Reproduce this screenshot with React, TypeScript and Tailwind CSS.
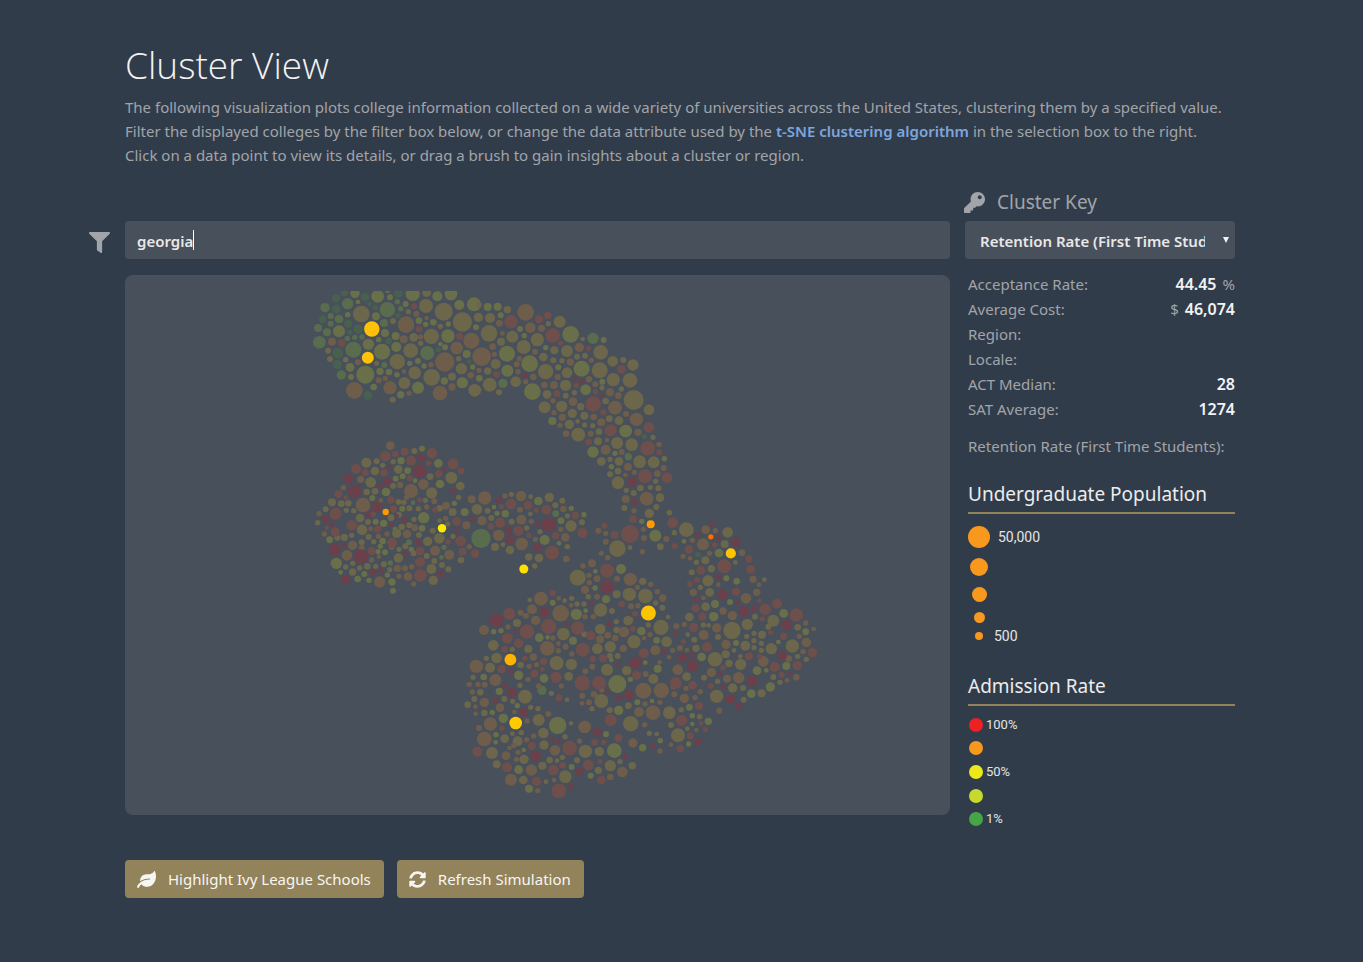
import { useState } from "react";
import type { ReactNode } from "react";
import { FaFilter, FaKey, FaLeaf, FaSyncAlt } from "react-icons/fa";

/* Muted points run from low admission rate (a, green) to high (g, red). */
const mutedColors: Record<string, string> = {
  a: "#48614f",
  b: "#596c4e",
  c: "#697049",
  d: "#6c664a",
  e: "#6e5d4a",
  f: "#6f4f4b",
  g: "#6c404a",
};

type Tile = { x: number; y: number; dots: Record<string, string> };

/* Each tile has an origin in plot units; its dots are "x,y,r" in thirds of a unit. */
const tiles: Tile[] = [
  {
    x: 300,
    y: 280,
    dots: {
      a: "133,38,11 108,55,12 195,51,12 295,40,13 109,87,13 68,118,11 145,131,12 174,148,14 113,219,16 112,254,14 204,346,13 209,72,7 226,83,8 150,157,8 266,183,9 415,209,8 508,245,7 294,106,8",
      b: "143,71,17 262,89,23 117,117,13 92,108,9 54,144,12 81,157,12 58,187,19 160,209,24 75,83,14 92,131,9 124,285,14 382,219,21 142,175,8 164,172,8 186,171,8 292,65,8 302,86,8 252,129,12 253,255,9",
      c: "165,40,14 233,49,19 338,42,21 412,49,15 453,42,19 270,52,9 317,72,9 228,109,12 117,154,18 174,66,7 143,104,8 205,193,17 255,159,12 246,215,24 287,168,12 236,179,8 289,201,15 150,262,13 196,284,27 153,291,9 221,321,10 240,274,11 267,276,10 291,284,8 354,243,9 329,250,8 354,323,18 302,344,11 372,258,8 478,75,15 522,73,21 357,122,10 377,133,8 400,127,10 445,132,8 444,168,20 528,142,9 421,192,7 435,202,9 433,303,11 487,308,17 500,222,12 518,261,8 538,295,10 137,239,8",
      d: "184,102,25 378,78,21 325,95,8 431,95,27 487,126,29 394,169,23 341,172,13 292,245,23 332,212,22 344,278,19 395,292,25 484,266,17 313,309,18 535,112,14 278,359,9 230,250,8 456,290,12 524,331,19 84,212,9 90,237,9 380,38,13 279,123,9 421,139,8 362,190,8 476,236,8 263,31,8",
      e: "96,185,12 318,134,25 311,178,12 349,101,9 380,114,7 362,171,8 514,182,24 470,204,19 434,246,29 163,331,25 270,323,20 236,301,9 256,295,8 312,275,7 393,254,8 327,340,8 420,339,22 456,321,11 512,286,10 174,247,9 537,271,8",
      f: "125,189,11 342,79,9 357,147,10 479,169,11",
    },
  },
  {
    x: 480,
    y: 280,
    dots: {
      a: "493,470,8",
      b: "69,310,14 339,175,17 445,530,11",
      c: "53,80,12 23,81,12 62,106,9 81,221,24 149,251,25 120,147,9 133,167,8 82,272,18 157,335,25 197,203,8 235,262,9 272,163,25 305,266,24 371,180,9 317,329,16 367,305,9 339,516,17 217,423,12 437,453,19 405,520,8 394,560,8 553,536,8",
      d: "-4,75,9 30,114,15 82,89,11 0,113,9 27,160,25 63,185,12 47,252,15 23,273,11 29,314,21 0,330,5 57,337,9 107,305,16 97,170,18 205,131,8 239,125,18 308,177,7 172,179,20 131,201,21 223,211,12 190,231,13 220,241,9 261,213,18 246,242,8 197,275,23 261,278,16 291,230,9 315,227,9 257,316,17 362,217,22 359,271,24 400,299,20 398,244,16 430,240,9 459,255,17 450,301,22 461,360,30 366,323,8 424,327,8 201,343,13 257,347,9 283,338,8 245,379,17 277,400,14 302,380,11 194,382,18 313,407,12 268,433,14 293,424,7 314,435,8 338,437,8 295,464,21 357,455,10 354,484,12 388,416,10 417,422,13 377,363,10 507,389,16 519,472,8 411,489,18 455,494,19 479,545,19 521,547,18 417,544,13 364,544,13 390,538,8 414,573,10 390,583,9 414,608,19 439,631,8 461,639,9 481,624,10 511,622,8 535,625,9 527,604,8 433,684,9 529,681,9 508,700,14 568,698,8 540,653,13",
      e: "137,97,25 151,143,16 58,130,10 67,160,7 38,200,10 43,223,8 5,230,28 110,253,9 118,236,8 114,275,8 160,291,10 137,305,8 185,145,11 165,215,9 271,246,11 298,202,14 334,241,8 233,291,9 193,315,10 222,315,12 327,298,10 346,313,9 219,362,8 279,365,13 247,412,11 240,436,8 222,398,8 341,411,10 364,427,12 258,461,10 332,461,9 381,480,7 377,509,15 405,383,21 415,347,10 390,337,12 438,402,9 469,418,20 474,457,11 425,516,9 444,561,12 463,577,8 436,585,7 532,581,10 551,564,9 537,493,8 500,656,21 437,657,12 462,692,8",
      f: "93,125,20 50,283,10 177,118,12 203,106,11 218,167,22 242,190,8 326,205,8 340,372,23 231,341,10 289,316,8 424,268,13 392,451,18 326,486,10 370,397,9 507,442,16 503,505,22 538,517,9 495,589,21 561,593,16 346,335,8",
      g: "134,286,8 286,297,8 305,304,7 365,346,7 456,606,15 464,665,10",
    },
  },
  {
    x: 305,
    y: 430,
    dots: {
      b: "256,399,8 312,337,9 417,352,8 409,382,7 324,218,7",
      c: "351,56,9 288,92,11 272,146,9 293,139,9 308,122,10 243,186,13 405,162,13 400,100,13 202,204,9 236,280,11 212,275,9 233,333,10 226,349,8 356,263,17 351,295,10 448,220,8 94,400,17 107,427,7 158,447,10 192,451,8 178,432,9 261,456,11 264,482,9 219,365,8 247,435,8 240,367,9 74,329,10 319,358,8 330,152,7 292,236,9 270,297,7 479,246,12",
      d: "184,98,15 215,94,9 233,106,8 210,123,13 265,95,8 280,118,13 328,63,9 197,157,16 264,168,9 185,186,10 210,184,10 81,217,12 62,238,9 130,220,10 109,221,10 124,241,8 146,242,8 165,264,13 189,276,9 171,299,16 118,322,11 97,323,9 140,316,8 170,337,9 191,321,9 187,409,10 164,414,8 122,411,8 143,400,8 143,426,11 212,409,8 206,335,8 258,263,10 275,310,14 290,291,10 282,254,9 281,216,9 297,217,8 313,235,9 340,236,8 361,211,8 380,189,17 375,140,10 439,143,18 466,168,13 403,325,16 383,302,9 428,282,8 443,246,12 368,334,14 342,315,9 280,384,14 301,349,9 282,358,8 326,370,9 365,378,9 379,417,15 385,451,14 411,405,9 388,393,9 430,418,9 467,391,9 444,319,8 38,278,8 404,235,10 404,272,7 313,286,9 254,419,8 327,268,8 461,202,8 237,403,9 516,238,16",
      e: "256,47,13 318,183,21 174,225,22 143,346,14 126,376,16 42,251,8 58,312,8 115,173,8 167,148,11 224,456,17 277,415,11 300,415,9 320,410,8 326,462,8 309,440,13 282,439,8 306,312,13 329,293,10 433,374,15 390,362,15 423,227,12 388,214,9 285,165,10 355,163,16 305,202,8 200,390,8 222,380,7 246,312,8 220,319,8 197,296,7 260,352,8 365,231,8 422,265,8 484,286,12 531,272,14 500,208,12 539,204,20 473,365,11 493,350,8 170,354,9 228,211,7",
      f: "140,286,16 218,297,11 241,79,16 271,72,10 299,65,12 381,70,16 318,92,15 153,117,15 181,128,10 237,128,11 314,145,9 444,101,16 468,123,10 401,132,11 371,100,8 100,193,12 122,203,7 92,251,18 91,306,14 66,293,7 200,363,12 261,338,15 205,253,8 258,210,11 265,237,11 345,363,13 346,436,19 345,397,15 455,274,13 467,333,16 390,240,9 429,336,8 344,210,8 510,371,12",
      g: "344,124,21 149,184,20 130,146,15 216,231,16 168,379,21 89,359,18 122,448,14 61,267,11 82,283,7 348,84,12 247,155,12 225,168,8 190,255,9 204,429,10 228,423,8 258,285,7 298,270,9 338,337,10 303,370,8 408,432,10 117,347,7 255,111,7 445,184,9 418,118,7 275,258,7 502,267,8 456,303,7",
    },
  },
  {
    x: 460,
    y: 480,
    dots: {
      b: "63,175,29 287,101,10",
      c: "235,63,13 102,81,7 136,101,11 111,100,8 334,85,8 303,122,10 372,104,8 254,180,15 297,190,7",
      d: "94,114,9 83,92,9 268,52,14 307,62,9 286,76,9 366,127,9 333,138,17 322,200,8 240,155,8 200,144,8 105,201,12 129,194,7 150,210,13 206,231,11 237,234,13 224,258,8 4,240,9 154,43,8 212,50,7 322,108,8 155,125,9 211,102,7 472,206,25 510,203,7",
      e: "183,48,16 135,48,8 116,166,17 184,119,15 185,192,19 316,172,13 310,87,10 180,89,9 302,148,8 226,178,8 319,237,10 214,124,8 415,152,9 437,160,8 437,185,9 424,220,8 443,233,8",
      f: "153,72,16 204,76,13 92,139,10 120,128,15 175,153,15 45,220,12 8,216,10 259,89,15 276,218,21 287,167,11 367,159,15 346,106,11 124,80,8 207,166,8 229,91,8 433,137,9 464,164,12 510,162,27 520,118,11",
      g: "267,133,21 145,149,11 150,178,13 115,59,9 234,133,8 232,203,12",
    },
  },
  {
    x: 455,
    y: 550,
    dots: {
      b: "261,421,14",
      c: "498,57,15 364,193,17 293,158,9 138,242,8 278,262,7 116,245,8 253,263,13 354,272,12 421,64,7 420,114,8 453,148,12 392,182,7 487,402,27 133,424,11 145,505,14 123,554,8 122,577,7 478,602,22 308,526,26 191,659,13 407,677,9 453,553,9 222,716,12 267,385,13 191,376,14 491,481,14 469,330,7 112,487,8 86,381,10 187,467,8 206,600,7 350,651,9 526,388,8",
      d: "368,83,24 523,133,20 485,133,12 437,180,20 471,183,9 436,237,16 325,252,19 305,339,21 349,343,17 220,297,12 115,286,16 125,324,16 186,219,12 105,353,15 210,440,21 251,510,18 265,549,16 111,609,18 188,574,15 149,566,13 199,548,8 207,628,14 267,585,14 262,647,12 205,690,13 391,604,20 433,605,14 430,661,11 466,647,17 532,647,11 331,680,19 466,290,17 427,296,16 456,359,18 439,453,21 341,379,13 519,212,14 485,240,10 530,521,20 515,362,14 488,318,9 224,150,7 329,152,7 350,145,8 366,162,8 387,162,8 400,140,8 94,325,8 172,298,8 197,345,10 54,382,8 76,427,10 38,464,10 58,447,9 88,489,10 148,447,9 227,472,8 249,476,8 348,520,7 330,560,8 366,631,9 284,630,10 306,632,7 322,622,8 495,635,8 273,695,7 125,643,12 172,551,7 195,406,8 289,430,8 336,449,7 411,476,8 520,467,10 464,481,9 465,317,9 484,215,8 388,253,9 173,454,8",
      e: "525,88,19 258,146,21 317,190,25 87,240,15 231,178,15 242,211,14 277,295,22 64,349,20 121,390,18 106,522,20 88,567,22 88,457,14 135,473,13 411,40,12 384,48,8 300,601,16 389,531,19 153,617,13 168,689,18 229,660,17 297,690,7 235,321,11 245,344,8 502,666,16 466,681,10 197,188,9 159,231,8 280,492,9 236,558,8 72,534,9 61,470,7 62,491,7 43,403,8 69,403,8 89,404,9 52,426,8 216,513,8 319,408,8 332,290,9 310,302,8 310,281,7 294,264,8 350,312,8 391,364,9 435,268,12 458,256,10 402,457,9 382,437,9 381,460,7 417,433,10 440,420,8 481,264,10 507,246,16 505,295,11 374,573,8 248,722,8 176,587,8 189,607,8 184,628,8 163,594,7 403,98,8 426,86,10 402,76,8 390,119,12 486,86,9 426,140,9 311,145,7 348,166,7 415,200,8 213,197,9 222,349,8 219,388,8 251,408,8 215,569,8 178,486,7 390,200,8 412,350,9",
      f: "456,62,21 163,191,18 216,245,22 281,230,23 157,265,16 191,280,14 293,130,10 407,257,14 432,399,21 382,399,23 383,299,21 368,234,20 149,298,10 238,371,12 303,382,17 439,690,13 230,588,12 323,646,10 245,694,14 444,325,12 413,327,10 344,594,22 312,723,22 295,660,16 400,645,16 467,511,18 490,564,12 156,652,15 67,605,15 140,357,13 266,334,11 210,325,8 312,443,10 419,577,10 446,577,8 435,635,8 500,162,10 545,376,13 141,535,8 262,358,7",
      g: "124,211,20 269,187,15 456,111,20 171,428,14 151,407,9 121,450,9 205,487,13 242,619,16 290,569,8 311,573,7 348,710,8 373,665,11 426,547,13 181,246,7 337,223,7 463,223,8 541,340,17 522,436,15 491,444,9 455,425,7 489,343,7 409,160,7 511,619,8 168,364,8",
    },
  },
  {
    x: 630,
    y: 500,
    dots: {
      a: "204,164,8",
      c: "76,107,18 35,64,8 162,124,7 267,159,13 320,244,10 255,312,12 289,235,9 34,393,13 80,421,10 83,506,12 251,350,14 421,561,14 364,581,13 469,498,12 318,429,9 178,622,10 235,664,11 381,512,13 461,340,13 527,395,10 300,306,9 176,732,8 38,743,11 91,722,8 187,672,7 66,603,7 22,607,9 215,471,13 409,511,7 445,426,7 187,647,8 46,488,7",
      d: "169,89,22 293,97,16 284,132,12 46,288,22 12,425,20 91,140,10 118,38,8 38,244,11 226,181,12 185,217,9 234,242,17 239,277,13 306,391,26 352,373,17 424,446,17 487,438,20 430,362,18 255,478,22 332,493,17 346,437,15 260,589,20 144,706,21 118,638,19 110,425,16 93,382,23 70,537,15 227,320,13 178,351,13 244,206,11 316,187,7 199,187,8 211,262,8 403,239,7 375,350,9 372,400,8 350,409,8 396,404,12 415,380,9 287,463,12 297,490,11 308,564,14 339,564,9 341,599,9 395,580,12 430,531,9 450,547,8 503,382,10 503,469,8 198,445,11 170,530,13 97,323,9 77,309,8 133,98,8 114,351,7 193,419,9 173,404,7 264,411,9 220,375,8 236,376,7 331,469,7 222,533,9 263,544,8 394,430,8 372,422,8 372,443,8 0,283,18 2,671,23 172,686,7 123,675,9 209,650,8 58,700,8 80,702,7 154,629,8 2,360,8 55,375,8 312,451,7 394,451,8 529,478,8",
      e: "326,533,17 94,571,23 369,238,11 27,636,15 12,33,7 40,88,8 42,114,9 109,117,9 37,155,8 219,133,18 227,89,13 256,92,8 187,121,8 239,160,8 159,169,8 180,175,7 336,158,10 348,295,16 380,277,11 387,254,7 265,254,7 98,294,11 82,275,8 62,253,8 4,237,17 220,294,7 190,277,11 221,405,15 307,347,14 279,333,11 288,433,14 260,384,14 244,517,14 291,536,12 400,484,16 143,509,16 40,572,24 69,638,22 44,674,8 9,729,14 90,753,8 123,734,7 211,575,8 195,593,8 163,595,14 268,632,9 551,387,7 529,427,14 527,369,8 508,409,8 519,455,8 499,532,10 471,541,7 476,476,10 139,378,9 163,373,8 128,451,8 150,444,9 171,450,7 60,404,8 76,451,15 90,607,8 130,560,8 89,487,7 117,472,7 133,583,9 168,565,8 47,522,9 45,612,8 24,317,8 3,319,9 22,262,8 42,414,7 199,690,7",
      f: "9,57,11 128,68,16 177,148,13 134,138,9 254,135,8 357,177,11 362,208,13 318,275,12 212,211,13 180,252,9 201,240,9 283,199,21 197,325,12 217,350,12 191,382,14 231,441,15 41,460,15 137,549,18 188,555,13 155,661,17 151,746,11 207,618,12 181,707,10 226,688,8 499,345,20 406,328,17 441,311,15 434,501,15 502,497,14 547,458,14 461,409,11 455,524,9 397,357,8 389,302,7 243,558,9 422,397,8 357,469,12 20,526,13 9,387,9 389,469,8 160,425,8 15,341,9 279,503,8 213,670,7",
      g: "247,71,8 265,114,8 203,104,8 318,127,14 265,231,9 199,299,8 277,284,15 322,309,7 342,334,16 373,324,9 470,375,16 457,467,14 366,543,16 301,598,15 326,620,10 280,561,8 270,520,7 188,497,18 157,474,14 185,465,8 136,402,8 16,489,18 103,455,8 478,522,7 204,725,11 71,738,8 0,585,11",
    },
  },
];

const matches = [
  { x: 371.8, y: 329, r: 7.7, color: "#ffc107" },
  { x: 367.8, y: 357.7, r: 6, color: "#ffc107" },
  { x: 385.7, y: 512, r: 3.2, color: "#ff9800" },
  { x: 442, y: 528.2, r: 4.2, color: "#ffeb00" },
  { x: 523.8, y: 569, r: 4.5, color: "#ffe000" },
  { x: 650.7, y: 524.3, r: 4, color: "#ff9a00" },
  { x: 710.8, y: 536.8, r: 2.6, color: "#ff6d00" },
  { x: 730.8, y: 553.4, r: 5.1, color: "#ffc400" },
  { x: 648.4, y: 613, r: 7.5, color: "#ffc400" },
  { x: 510.4, y: 659.7, r: 5.9, color: "#ffb300" },
  { x: 515.7, y: 723, r: 6.3, color: "#ffca00" },
];

const points = tiles.flatMap((tile) =>
  Object.entries(tile.dots).flatMap(([key, list]) =>
    list.split(" ").map((entry) => {
      const [x, y, r] = entry.split(",").map(Number);
      return { x: tile.x + x / 3, y: tile.y + y / 3, r: r / 3, color: mutedColors[key] };
    }),
  ),
);

function ClusterPlot() {
  return (
    <div className="mt-4 rounded-lg bg-[#48505b] p-4">
      <svg viewBox="141 291 793 508" className="block w-full" role="img" aria-label="College clusters">
        {points.map((p, i) => (
          <circle key={i} cx={p.x} cy={p.y} r={p.r} fill={p.color} />
        ))}
        {matches.map((p, i) => (
          <circle key={i} cx={p.x} cy={p.y} r={p.r} fill={p.color} />
        ))}
      </svg>
    </div>
  );
}

function Row({ label, children }: { label: string; children?: ReactNode }) {
  return (
    <div className="flex justify-between">
      <dt>{label}</dt>
      <dd>{children}</dd>
    </div>
  );
}

function Strong({ children }: { children: ReactNode }) {
  return <span className="text-base leading-[25px] font-semibold text-[#f2f2f2]">{children}</span>;
}

function KeyHeading({ children }: { children: ReactNode }) {
  return (
    <h3 className="h-[35px] border-b-2 border-[#93835b] text-[19px] leading-[30px] text-[#ececec]">{children}</h3>
  );
}

const rates = [
  { color: "bg-[#ed2024]", label: "100%" },
  { color: "bg-[#f8981d]", label: "" },
  { color: "bg-[#ece81a]", label: "50%" },
  { color: "bg-[#c6d92d]", label: "" },
  { color: "bg-[#47a447]", label: "1%" },
];

const sizes = [
  { row: "h-[30px]", dot: "size-[22px]", label: "50,000", gap: "ml-2" },
  { row: "h-[30px]", dot: "size-[18px]", label: "", gap: "ml-2" },
  { row: "h-6", dot: "size-[15px]", label: "", gap: "ml-2" },
  { row: "h-[22px]", dot: "size-[11px]", label: "", gap: "ml-2" },
  { row: "h-4", dot: "size-2", label: "500", gap: "ml-1" },
];

export default function App() {
  const [query, setQuery] = useState("georgia");

  return (
    <div className="min-h-screen bg-[#313c4a] pr-[3px] font-['Noto_Sans','Open_Sans',sans-serif] text-[15px] text-[#a1a4a9]">
      <main className="mx-auto max-w-[1110px] pt-10 pb-16">
        <h1 className="mb-[7px] font-['Open_Sans',sans-serif] text-[37px] leading-[50px] font-light text-[#f2f2f2]">
          Cluster View
        </h1>
        <p className="-mt-0.5 leading-6">
          The following visualization plots college information collected on a wide variety of universities across the
          United States, clustering them by a specified value.
          <br />
          Filter the displayed colleges by the filter box below, or change the data attribute used by the{" "}
          <a href="#tsne" className="font-semibold text-[#7ea6dc]">
            t-SNE clustering algorithm
          </a>{" "}
          in the selection box to the right.
          <br />
          Click on a data point to view its details, or drag a brush to gain insights about a cluster or region.
        </p>

        <div className="mt-[23px] flex gap-[15px]">
          <section className="min-w-0 flex-1 pt-[31px]">
            <div className="-ml-9 flex items-center gap-[15px]">
              <label htmlFor="filter" aria-label="Filter colleges" className="pt-1">
                <FaFilter size={21} />
              </label>
              <div className="relative flex-1">
                <input
                  id="filter"
                  type="text"
                  value={query}
                  onChange={(e) => setQuery(e.target.value)}
                  className="block h-[38px] w-full rounded bg-[#48505b] px-3 pt-0.5 font-semibold text-[#e8e8e8] caret-transparent outline-none"
                />
                <span aria-hidden="true" className="absolute top-[9px] left-[68px] h-5 w-px bg-white" />
              </div>
            </div>

            <ClusterPlot />

            <div className="mt-[45px] flex gap-[13px] text-[#f7f6f2]">
              <button className="flex h-[38px] items-center gap-3 rounded bg-[#93835b] px-[13px] pl-3">
                <FaLeaf size={19} />
                Highlight Ivy League Schools
              </button>
              <button className="flex h-[38px] items-center gap-3 rounded bg-[#93835b] px-[13px] pl-3">
                <FaSyncAlt size={17} />
                Refresh Simulation
              </button>
            </div>
          </section>

          <aside className="w-[270px] shrink-0">
            <label htmlFor="attribute" className="mb-[7px] -ml-px flex h-6 items-center gap-3 text-[19px]">
              <FaKey size={21} />
              Cluster Key
            </label>
            <div className="relative">
              <select
                id="attribute"
                className="block h-[38px] w-full appearance-none rounded bg-[#48505b] pr-[30px] pl-[15px] pt-0.5 font-semibold text-[#e8e8e8] outline-none"
              >
                <option>Retention Rate (First Time Students)</option>
              </select>
              <svg viewBox="0 0 6 6" className="pointer-events-none absolute top-4 right-[6px] size-[6px]" aria-hidden="true">
                <path d="M0 0h6L3 6z" fill="#f2f2f2" />
              </svg>
            </div>

            <dl className="mt-[13px] pl-[3px] leading-[25px]">
              <Row label="Acceptance Rate:">
                <Strong>44.45</Strong>
                <span className="ml-1.5">%</span>
              </Row>
              <Row label="Average Cost:">
                <span className="mr-1.5">$</span>
                <Strong>46,074</Strong>
              </Row>
              <Row label="Region:" />
              <Row label="Locale:" />
              <Row label="ACT Median:">
                <Strong>28</Strong>
              </Row>
              <Row label="SAT Average:">
                <Strong>1274</Strong>
              </Row>
              <div className="mt-3">
                <Row label="Retention Rate (First Time Students):" />
              </div>
            </dl>

            <div className="mt-5 pl-[3px] text-[#e4e4e4]">
              <KeyHeading>Undergraduate Population</KeyHeading>
              <ul className="mt-2 font-[Roboto,sans-serif] text-sm">
                {sizes.map((s, i) => (
                  <li key={i} className={`flex items-center ${s.row}`}>
                    <span className="flex w-[22px] justify-center">
                      <span className={`rounded-full bg-[#f8981d] ${s.dot}`} />
                    </span>
                    <span className={s.gap}>{s.label}</span>
                  </li>
                ))}
              </ul>
            </div>

            <div className="mt-[27px] pl-[3px] text-[#e4e4e4]">
              <KeyHeading>Admission Rate</KeyHeading>
              <ul className="mt-[7px] grid h-[118px] grid-rows-5 pl-px font-[Roboto,sans-serif] text-[13px]">
                {rates.map((r, i) => (
                  <li key={i} className="flex items-center gap-[3px]">
                    <span className={`size-3.5 rounded-full ${r.color}`} />
                    {r.label}
                  </li>
                ))}
              </ul>
            </div>
          </aside>
        </div>
      </main>
    </div>
  );
}
